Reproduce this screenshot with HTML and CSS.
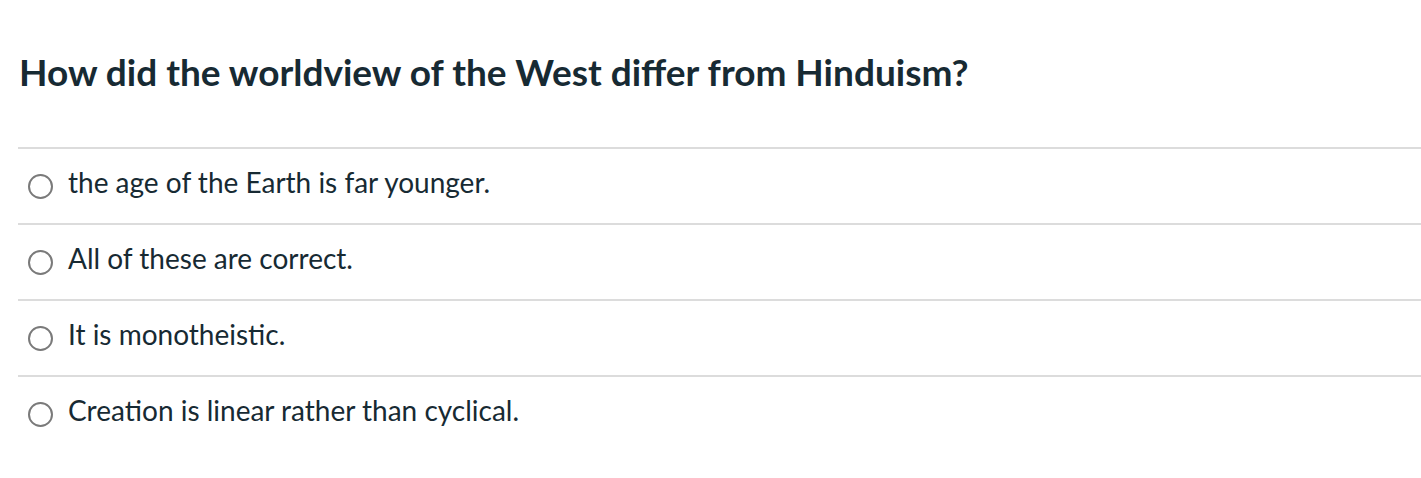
FILE: index.html
```html
<!DOCTYPE html>
<html>
<head>
<meta charset="utf-8">
<link rel="stylesheet" href="styles.css">
</head>
<body>
<div class="quiz">
  <h1 class="question">How did the worldview of the West differ from Hinduism?</h1>
  <ul class="answers">
    <li class="answer"><span class="radio"></span><span class="label">the age of the Earth is far younger.</span></li>
    <li class="answer"><span class="radio"></span><span class="label">All of these are correct.</span></li>
    <li class="answer"><span class="radio"></span><span class="label">It is monotheistic.</span></li>
    <li class="answer"><span class="radio"></span><span class="label">Creation is linear rather than cyclical.</span></li>
  </ul>
</div>
</body>
</html>
```

FILE: styles.css
```css
html, body {
  margin: 0;
  padding: 0;
  background: #ffffff;
}
body {
  font-family: Lato, "Liberation Sans", sans-serif;
  color: #172a33;
}
.quiz {
  padding: 0 0 0 18px;
}
.question {
  font-size: 37px;
  font-weight: 700;
  line-height: 44px;
  margin: 0;
  padding: 50px 0 53px 1px;
}
.answers {
  list-style: none;
  margin: 0;
  padding: 0;
}
.answer {
  display: flex;
  align-items: center;
  gap: 15px;
  height: 74px;
  border-top: 2px solid #dcdcdc;
  padding-left: 10px;
}
.radio {
  width: 21px;
  height: 21px;
  border: 2px solid #7a7a7a;
  border-radius: 50%;
  flex: none;
}
.label {
  font-size: 28px;
  line-height: 32px;
  padding-bottom: 8px;
}
```
